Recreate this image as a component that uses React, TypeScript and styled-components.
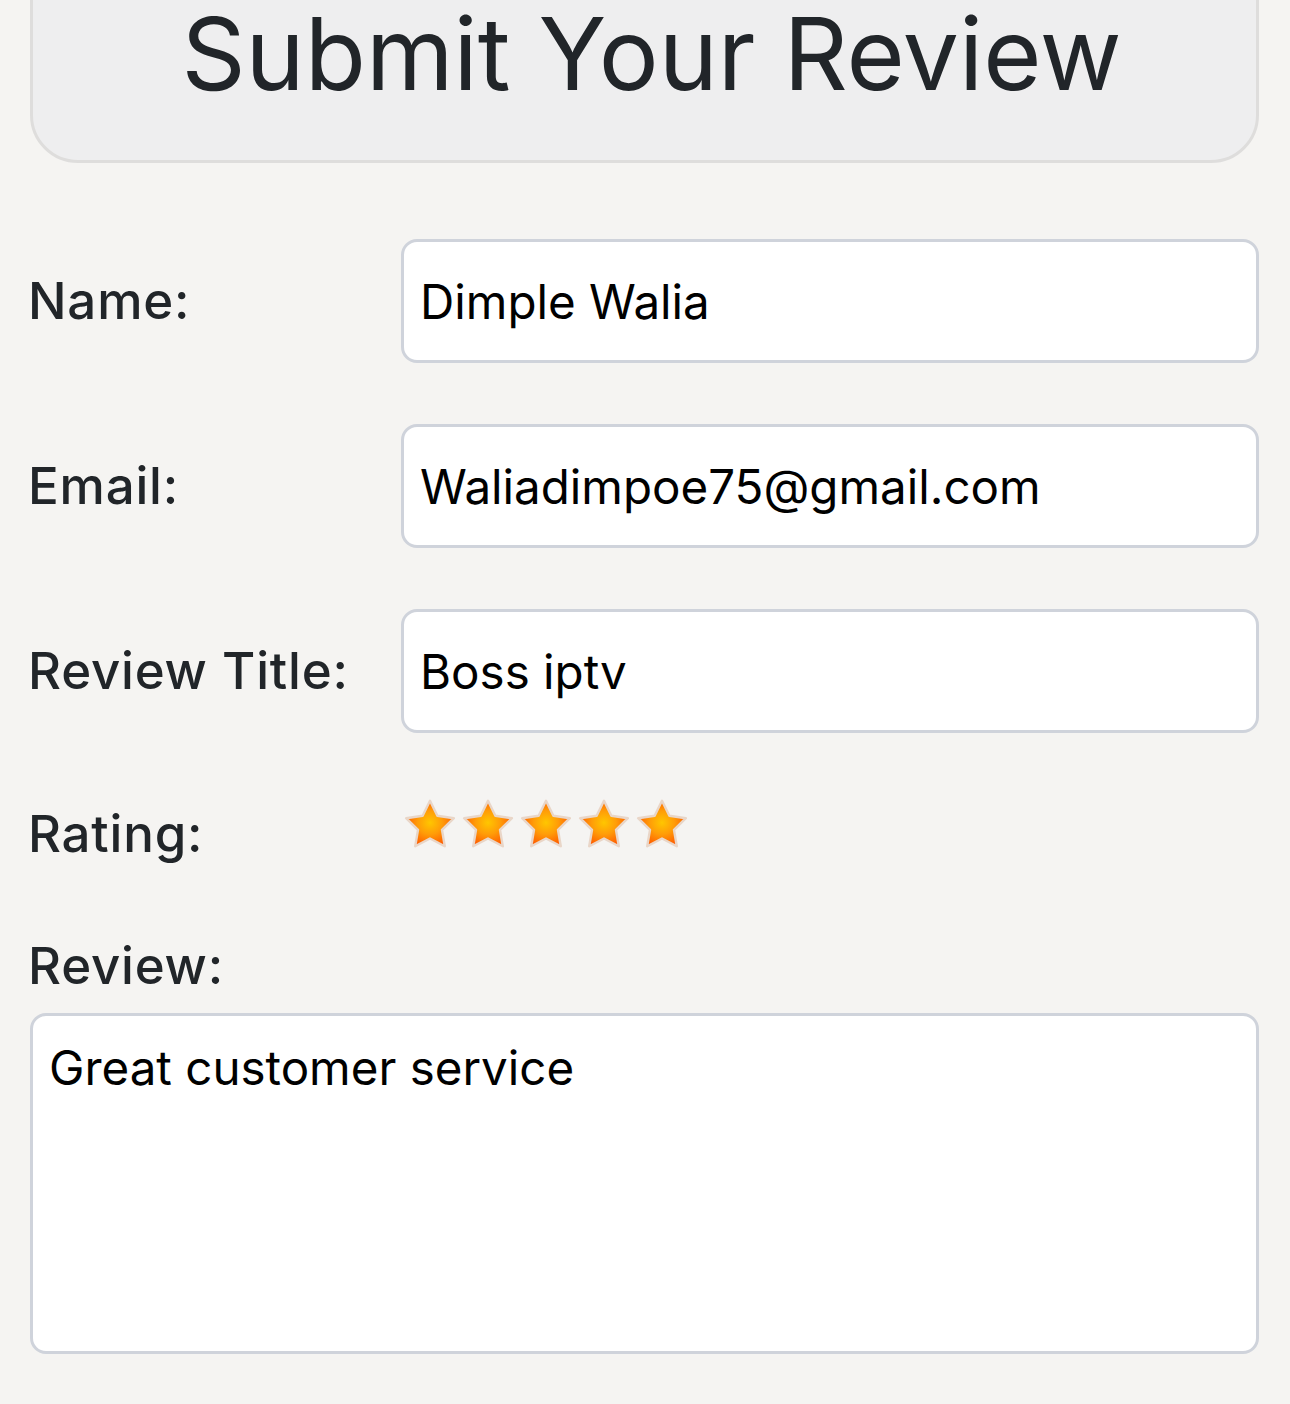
import React from 'react';
import styled, { createGlobalStyle } from 'styled-components';

const GlobalStyle = createGlobalStyle`
   html, body {
      margin: 0;
      padding: 0;
      background: #f5f4f2;
   }
   body {
      font-family: Inter, "Noto Sans", "Liberation Sans", sans-serif;
      color: #212529;
      overflow: hidden;
   }
`;

type Field = {
   label: string;
   value: string;
};

const fields: Field[] = [
   { label: 'Name:', value: 'Dimple Walia' },
   { label: 'Email:', value: 'Waliadimpoe75@gmail.com' },
   { label: 'Review Title:', value: 'Boss iptv' },
];

const Star = ({ id }: { id: string }) => (
   <StarIcon viewBox="0 0 60 60" aria-hidden="true">
      <defs>
         <radialGradient id={id} cx="50%" cy="48%" r="52%">
            <stop offset="0%" stopColor="#ffc600" />
            <stop offset="50%" stopColor="#ff9c08" />
            <stop offset="100%" stopColor="#ff5e00" />
         </radialGradient>
      </defs>
      <path
         d="M30 5 L37.6 20.5 L54.7 23 L42.4 35 L45.3 52 L30 44 L14.7 52 L17.6 35 L5.3 23 L22.4 20.5 Z"
         fill={`url(#${id})`}
         stroke="#e9d6c8"
         strokeWidth="2.5"
         strokeLinejoin="round"
      />
   </StarIcon>
);

const App = () => {
   return (
      <>
         <GlobalStyle />
         <Page>
            <Header>
               <Title>Submit Your Review</Title>
            </Header>
            <Form>
               {fields.map((f) => (
                  <Row key={f.label}>
                     <Label>{f.label}</Label>
                     <Input type="text" defaultValue={f.value} />
                  </Row>
               ))}
               <RatingRow>
                  <RatingLabel>Rating:</RatingLabel>
                  <Stars>
                     {[0, 1, 2, 3, 4].map((i) => (
                        <Star key={i} id={`star-grad-${i}`} />
                     ))}
                  </Stars>
               </RatingRow>
               <ReviewBlock>
                  <Label>Review:</Label>
                  <TextArea defaultValue="Great customer service" />
               </ReviewBlock>
            </Form>
         </Page>
      </>
   );
};

const Page = styled.div`
   padding: 0 31px 0 30px;
`;

const Header = styled.div`
   margin-top: -50px;
   padding: 41px 0 46px;
   background: #eeeeef;
   border: 3px solid #dedddc;
   border-radius: 48px;
   text-align: center;
`;

const Title = styled.h1`
   margin: 0;
   font-size: 100px;
   line-height: 1.2;
   font-weight: 400;
   color: #212529;
   padding-left: 14px;
`;

const Form = styled.form`
   display: flex;
   flex-direction: column;
   margin-top: 76px;
`;

const Row = styled.div`
   display: grid;
   grid-template-columns: 371px 1fr;
   align-items: center;
   margin-bottom: 61px;
`;

const RatingRow = styled(Row)`
   align-items: start;
   margin-bottom: 71px;
`;

const Label = styled.label`
   margin-left: -2px;
   font-size: 51px;
   line-height: 1.2;
   font-weight: 500;
   letter-spacing: 0.8px;
   color: #212529;
`;

const RatingLabel = styled(Label)`
   margin-top: 9px;
`;

const Input = styled.input`
   box-sizing: border-box;
   width: 100%;
   height: 124px;
   padding: 0 16px;
   border: 3px solid #cfd3db;
   border-radius: 16px;
   background: #fff;
   font-family: Inter, "Noto Sans", "Liberation Sans", sans-serif;
   font-size: 47.5px;
   color: #000;
   outline: none;
`;

const Stars = styled.div`
   display: flex;
   margin-top: 2px;
`;

const StarIcon = styled.svg`
   width: 58px;
   height: 58px;
   display: block;
`;

const ReviewBlock = styled.div`
   display: flex;
   flex-direction: column;
   gap: 17px;
`;

const TextArea = styled.textarea`
   box-sizing: border-box;
   width: 100%;
   height: 341px;
   padding: 16px 16px;
   border: 3px solid #cfd3db;
   border-radius: 16px;
   background: #fff;
   font-family: Inter, "Noto Sans", "Liberation Sans", sans-serif;
   font-size: 47.5px;
   line-height: 1.5;
   color: #000;
   resize: none;
   outline: none;
`;

export default App;
